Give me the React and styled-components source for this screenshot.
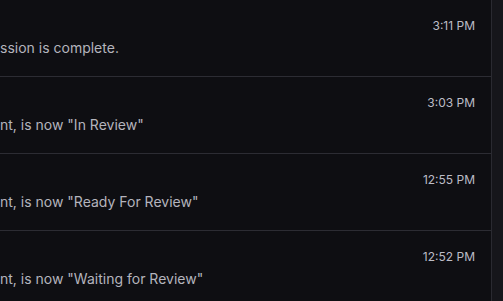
import styled, { createGlobalStyle } from "styled-components";

const GlobalStyle = createGlobalStyle`
  html, body {
    margin: 0;
    padding: 0;
    background: #0e0e12;
    font-family: Inter, "Noto Sans", sans-serif;
    overflow: hidden;
  }
`;

const Layout = styled.div`
  display: flex;
  width: 503px;
  height: 301px;
  overflow: hidden;
`;

const Feed = styled.div`
  flex: 1;
  display: flex;
  flex-direction: column;
  background: #0e0e12;
  border-right: 1px solid #2a2a31;
  margin-top: -1px;
`;

const Gutter = styled.div`
  width: 11px;
  background: #16161b;
`;

const Item = styled.div`
  display: flex;
  flex-direction: column;
  height: 76px;
  flex-shrink: 0;
  border-top: 1px solid #2c2c33;
  padding: 0 16px 0 0;
  box-sizing: content-box;
`;

const Time = styled.span`
  align-self: flex-end;
  margin-top: 18px;
  font-size: 12px;
  line-height: 16px;
  color: #bcbcc6;
`;

const Message = styled.p`
  margin: 5px 0 0;
  font-size: 14px;
  line-height: 18px;
  color: #b4b4bd;
  white-space: nowrap;
`;

const notifications = [
  { time: "3:11 PM", text: "ssion is complete." },
  { time: "3:03 PM", text: 'nt, is now "In Review"' },
  { time: "12:55 PM", text: 'nt, is now "Ready For Review"' },
  { time: "12:52 PM", text: 'nt, is now "Waiting for Review"' },
];

export default function App() {
  return (
    <>
      <GlobalStyle />
      <Layout>
        <Feed>
          {notifications.map((n) => (
            <Item key={n.time}>
              <Time>{n.time}</Time>
              <Message>{n.text}</Message>
            </Item>
          ))}
        </Feed>
        <Gutter />
      </Layout>
    </>
  );
}
